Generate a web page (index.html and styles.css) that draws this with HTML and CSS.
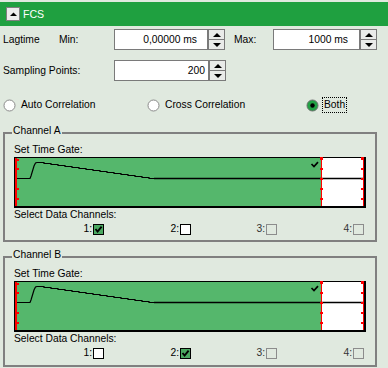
FILE: index.html
```html
<!DOCTYPE html>
<html>
<head>
<meta charset="utf-8">
<link rel="stylesheet" href="styles.css">
</head>
<body>
<div class="header">
  <span class="collapse"><svg width="7" height="4" viewBox="0 0 7 4"><path d="M0 4 L3.5 0.5 L7 4 Z" fill="#000"/></svg></span>
  <span class="title">FCS</span>
</div>

<div class="row row1">
  <span class="lbl w-lag">Lagtime</span>
  <span class="lbl w-min">Min:</span>
  <div class="spin">
    <div class="field f-min">0,00000 ms</div>
    <div class="arrows"><span class="arrow up"></span><span class="arrow down"></span></div>
  </div>
  <span class="lbl w-max">Max:</span>
  <div class="spin">
    <div class="field f-max">1000 ms</div>
    <div class="arrows"><span class="arrow up"></span><span class="arrow down"></span></div>
  </div>
</div>

<div class="row row2">
  <span class="lbl w-samp">Sampling Points:</span>
  <div class="spin">
    <div class="field f-samp">200</div>
    <div class="arrows"><span class="arrow up"></span><span class="arrow down"></span></div>
  </div>
</div>

<div class="radios">
  <label class="radio r-auto"><svg class="rcirc" width="13" height="13" viewBox="0 0 13 13"><circle cx="6.5" cy="6.5" r="5.5" fill="#fff" stroke="#8a8a8a"/></svg><span class="rtext">Auto Correlation</span></label>
  <label class="radio r-cross"><svg class="rcirc" width="13" height="13" viewBox="0 0 13 13"><circle cx="6.5" cy="6.5" r="5.5" fill="#fff" stroke="#8a8a8a"/></svg><span class="rtext">Cross Correlation</span></label>
  <label class="radio r-both"><svg class="rcirc" width="13" height="13" viewBox="0 0 13 13"><circle cx="6.5" cy="6.5" r="5.5" fill="#22a244" stroke="#6f6f6f"/><circle cx="6.5" cy="6.5" r="2.2" fill="#000"/></svg><span class="rtext focus">Both</span></label>
</div>

<fieldset class="group g-a">
  <legend>Channel A</legend>
  <div class="cap">Set Time Gate:</div>
  <svg class="chart" width="352" height="51" viewBox="0 0 352 51">
    <rect x="0" y="0" width="352" height="51" fill="#000"/>
    <rect x="1" y="1" width="306" height="48" fill="#55b76c"/>
    <rect x="307" y="1" width="43" height="48" fill="#fff"/>
    <rect x="1" y="1" width="2" height="48" fill="#f00"/>
    <rect x="3" y="2" width="2" height="2" fill="#f00"/>
    <rect x="3" y="11" width="2" height="2" fill="#f00"/>
    <rect x="3" y="31" width="2" height="2" fill="#f00"/>
    <rect x="3" y="41" width="2" height="2" fill="#f00"/>
    <line x1="140" y1="21.5" x2="350" y2="21.5" stroke="#000" stroke-width="1.6"/>
    <polyline fill="none" stroke="#000" stroke-width="1.2" points="3,21.5 16,21.5 17,19 18.5,14 20,9 21.5,6 23,5.5 30,5.5 30,6.5 37,6.5 37,7.5 44,7.5 44,8.5 51,8.5 51,9.5 58,9.5 58,10.5 65,10.5 65,11.5 72,11.5 72,12.5 79,12.5 79,13.5 86,13.5 86,14.5 93,14.5 93,15.5 100,15.5 100,16.5 107,16.5 107,17.5 114,17.5 114,18.5 121,18.5 121,19.5 128,19.5 128,20.5 135,20.5 135,21.5 141,21.5"/>
    <rect x="307" y="1" width="1" height="48" fill="#f00"/>
    <rect x="349" y="1" width="1" height="48" fill="#f00"/>
    <g fill="#f00">
      <rect x="306" y="0" width="3" height="3"/><rect x="306" y="11" width="3" height="2"/><rect x="306" y="21" width="3" height="2"/><rect x="306" y="31" width="3" height="2"/><rect x="306" y="41" width="3" height="2"/>
      <rect x="347" y="0" width="3" height="3"/><rect x="347" y="11" width="3" height="2"/><rect x="347" y="21" width="3" height="2"/><rect x="347" y="31" width="3" height="2"/><rect x="347" y="41" width="3" height="2"/>
    </g>
    <path d="M297.5 7 L300 9.5 L304 5.2" fill="none" stroke="#000" stroke-width="1.7"/>
  </svg>
  <div class="cap cap2">Select Data Channels:</div>
  <div class="chans">
    <div class="chan"><span>1:</span><span class="cb on"><svg width="9" height="9" viewBox="0 0 9 9"><path d="M1.5 4 L3.6 6.6 L7.6 1.6" fill="none" stroke="#000" stroke-width="1.9"/></svg></span></div>
    <div class="chan"><span>2:</span><span class="cb"></span></div>
    <div class="chan dis"><span>3:</span><span class="cb"></span></div>
    <div class="chan dis"><span>4:</span><span class="cb"></span></div>
  </div>
</fieldset>

<fieldset class="group g-b">
  <legend>Channel B</legend>
  <div class="cap">Set Time Gate:</div>
  <svg class="chart" width="352" height="51" viewBox="0 0 352 51">
    <rect x="0" y="0" width="352" height="51" fill="#000"/>
    <rect x="1" y="1" width="306" height="48" fill="#55b76c"/>
    <rect x="307" y="1" width="43" height="48" fill="#fff"/>
    <rect x="1" y="1" width="2" height="48" fill="#f00"/>
    <rect x="3" y="2" width="2" height="2" fill="#f00"/>
    <rect x="3" y="11" width="2" height="2" fill="#f00"/>
    <rect x="3" y="31" width="2" height="2" fill="#f00"/>
    <rect x="3" y="41" width="2" height="2" fill="#f00"/>
    <line x1="140" y1="21.5" x2="350" y2="21.5" stroke="#000" stroke-width="1.6"/>
    <polyline fill="none" stroke="#000" stroke-width="1.2" points="3,21.5 16,21.5 17,19 18.5,14 20,9 21.5,6 23,5.5 30,5.5 30,6.5 37,6.5 37,7.5 44,7.5 44,8.5 51,8.5 51,9.5 58,9.5 58,10.5 65,10.5 65,11.5 72,11.5 72,12.5 79,12.5 79,13.5 86,13.5 86,14.5 93,14.5 93,15.5 100,15.5 100,16.5 107,16.5 107,17.5 114,17.5 114,18.5 121,18.5 121,19.5 128,19.5 128,20.5 135,20.5 135,21.5 141,21.5"/>
    <rect x="307" y="1" width="1" height="48" fill="#f00"/>
    <rect x="349" y="1" width="1" height="48" fill="#f00"/>
    <g fill="#f00">
      <rect x="306" y="0" width="3" height="3"/><rect x="306" y="11" width="3" height="2"/><rect x="306" y="21" width="3" height="2"/><rect x="306" y="31" width="3" height="2"/><rect x="306" y="41" width="3" height="2"/>
      <rect x="347" y="0" width="3" height="3"/><rect x="347" y="11" width="3" height="2"/><rect x="347" y="21" width="3" height="2"/><rect x="347" y="31" width="3" height="2"/><rect x="347" y="41" width="3" height="2"/>
    </g>
    <path d="M297.5 7 L300 9.5 L304 5.2" fill="none" stroke="#000" stroke-width="1.7"/>
  </svg>
  <div class="cap cap2">Select Data Channels:</div>
  <div class="chans">
    <div class="chan"><span>1:</span><span class="cb"></span></div>
    <div class="chan"><span>2:</span><span class="cb on"><svg width="9" height="9" viewBox="0 0 9 9"><path d="M1.5 4 L3.6 6.6 L7.6 1.6" fill="none" stroke="#000" stroke-width="1.9"/></svg></span></div>
    <div class="chan dis"><span>3:</span><span class="cb"></span></div>
    <div class="chan dis"><span>4:</span><span class="cb"></span></div>
  </div>
</fieldset>
</body>
</html>
```

FILE: styles.css
```css
html, body {
  margin: 0;
}
body {
  padding-top: 2px;
  width: 388px;
  height: 368px;
  box-sizing: border-box;
  overflow: hidden;
  background: #e0e9df;
  font-family: "Liberation Sans", Arial, sans-serif;
  font-size: 10.3px;
  line-height: 12px;
  color: #000;
}

.header {
  height: 24px;
  background: #1fa040;
  display: flex;
  align-items: center;
  padding-left: 6px;
}
.collapse {
  width: 14px;
  height: 14px;
  box-sizing: border-box;
  border: 1px solid #7f7f7f;
  background: #ececec;
  display: flex;
  align-items: center;
  justify-content: center;
}
.collapse svg { display: block; }
.title {
  color: #fff;
  margin-left: 3px;
  font-size: 10.6px;
}

.row {
  display: flex;
  align-items: center;
  height: 21px;
  padding-left: 3px;
}
.row1 { margin-top: 3px; }
.row2 { margin-top: 10px; }

.lbl { display: block; }
.w-lag { width: 56px; }
.w-min { width: 55px; }
.w-max { width: 39px; margin-left: 9px; }
.w-samp { width: 111px; }

.spin {
  display: flex;
  height: 21px;
}
.field {
  height: 21px;
  box-sizing: border-box;
  border: 1px solid #7a7a7a;
  background: #fff;
  display: flex;
  align-items: center;
  justify-content: flex-end;
}
.f-min { width: 94px; padding-right: 10px; }
.f-max { width: 87px; padding-right: 11px; }
.f-samp { width: 95px; padding-right: 3px; }

.arrows {
  width: 17px;
  height: 21px;
  display: flex;
  flex-direction: column;
  box-sizing: border-box;
}
.arrow {
  display: flex;
  align-items: center;
  justify-content: center;
  box-sizing: border-box;
  border: 1px solid #7a7a7a;
  background: #e9ebe9;
}
.arrow.up { height: 11px; }
.arrow.down { height: 10px; border-top: none; }
.arrow.up::before {
  content: "";
  border-left: 4px solid transparent;
  border-right: 4px solid transparent;
  border-bottom: 4px solid #000;
}
.arrow.down::before {
  content: "";
  border-left: 4px solid transparent;
  border-right: 4px solid transparent;
  border-top: 4px solid #000;
}

.radios {
  display: flex;
  align-items: center;
  height: 16px;
  margin-top: 16px;
  padding-left: 3px;
}
.radio {
  display: flex;
  align-items: center;
}
.r-auto { width: 144px; }
.r-cross { width: 159px; }
.rcirc { display: block; }
.rtext { margin-left: 5px; }
.r-both .rtext { margin-left: 3px; }
.focus {
  border: 1px dotted #000;
  padding: 0 1px;
  line-height: 14px;
}

.group {
  margin: 0 11px 0 3px;
  padding: 3px 9px 6px 9px;
  border: 2px solid #808080;
  min-width: 0;
}
.g-a { margin-top: 12px; }
.g-b { margin-top: 7px; padding-bottom: 7px; }
.group legend {
  padding: 0 1px 4px 1px;
  margin-left: -2px;
  line-height: 12px;
}

.cap { height: 12px; }
.chart {
  display: block;
  margin-top: 1px;
}
.cap2 { margin-top: 1px; }

.chans {
  display: grid;
  grid-template-columns: 90px 87px 86px 87px;
  height: 11px;
  margin-top: 2px;
}
.chan {
  display: flex;
  justify-content: flex-end;
  align-items: center;
  gap: 1px;
}
.cb {
  width: 11px;
  height: 11px;
  box-sizing: border-box;
  border: 1px solid #000;
  background: #fff;
  display: flex;
  align-items: center;
  justify-content: center;
}
.cb.on { background: #4aa860; }
.cb svg { display: block; }
.chan.dis { color: #333; }
.chan.dis .cb {
  border-color: #8c8c8c;
  background: transparent;
}
```
